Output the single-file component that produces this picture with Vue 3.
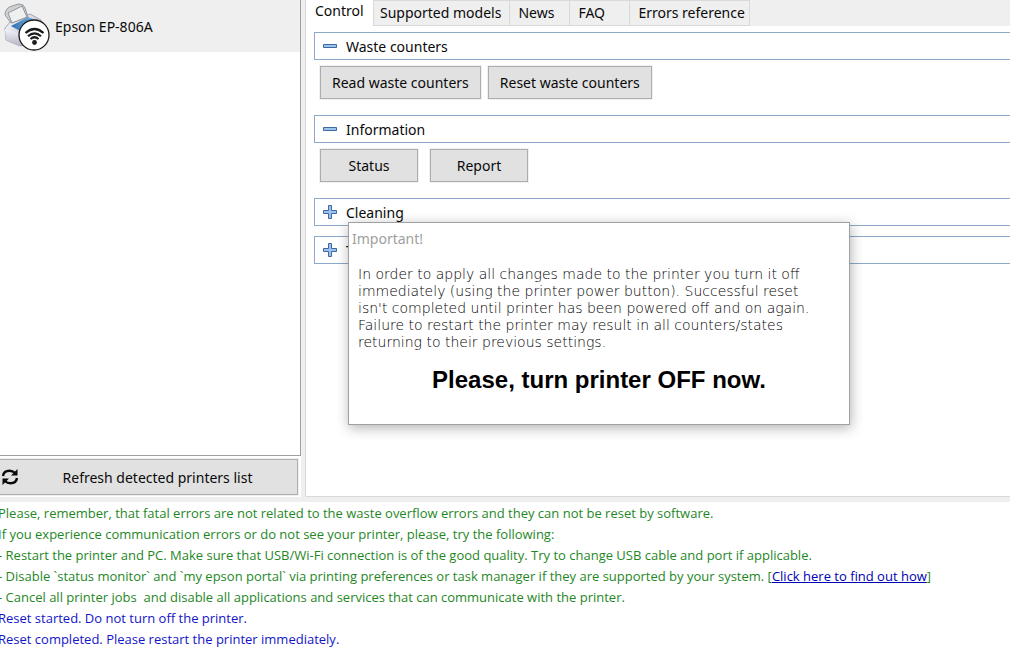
<template>
  <div class="app">
    <div class="workspace">
      <aside class="sidebar">
        <ul class="printer-list">
          <li v-for="printer in printers" :key="printer" class="printer">
            <svg class="printer-icon" width="50" height="50" viewBox="0 0 50 50">
              <defs>
                <linearGradient id="body" x1="0" y1="0" x2="1" y2="1">
                  <stop offset="0" stop-color="#ffffff" />
                  <stop offset="1" stop-color="#a9a9be" />
                </linearGradient>
                <linearGradient id="side" x1="0" y1="0" x2="0" y2="1">
                  <stop offset="0" stop-color="#f4f4fa" />
                  <stop offset="1" stop-color="#b4b4c6" />
                </linearGradient>
                <linearGradient id="tray" x1="0" y1="0" x2="1" y2="0">
                  <stop offset="0" stop-color="#2f6fb0" />
                  <stop offset="1" stop-color="#7db6e8" />
                </linearGradient>
              </defs>
              <path d="M5 27 L12 19 L30 13 L41 19 L42 38 L20 45 L6 39 Z" fill="url(#body)" stroke="#a4a4b4" />
              <path d="M5 28 L19 32 L20 45 L6 39 Z" fill="url(#side)" />
              <path d="M11 25 L28 16 L36 19 L20 30 Z" fill="url(#tray)" />
              <path d="M5 14 Q5 7 12 5 L19 3 Q24 3 25 7 L28 16 L11 22 Z" fill="#cfd2d5" stroke="#94989c" />
              <path d="M8 12 L22 5 L27 16 L12 22 Z" fill="#eef1f0" stroke="#8f9498" />
              <circle cx="34" cy="34" r="15" fill="#fff" stroke="#1a1a1a" stroke-width="1.3" />
              <g fill="none" stroke="#1a1a1a" stroke-width="2.2">
                <path d="M25.5 32 Q34.5 24 43.5 32" />
                <path d="M28 35.3 Q34.5 29.5 41 35.3" />
                <path d="M30.5 38 Q34.5 34.5 38.5 38" />
              </g>
              <circle cx="34.5" cy="41.5" r="2.4" fill="#1a1a1a" />
            </svg>
            <span>{{ printer }}</span>
          </li>
        </ul>
        <div class="sidebar-footer">
          <button class="btn refresh-btn">
            <svg width="18" height="18" viewBox="0 0 18 18">
              <g fill="none" stroke="#0a0a0a" stroke-width="2.4">
                <path d="M2 8 C2.5 4.5 5 2.8 8.5 2.8 C11 2.8 12.6 3.6 14 5" />
                <path d="M16 10 C15.5 13.5 13 15.2 9.5 15.2 C7 15.2 5.4 14.4 4 13" />
              </g>
              <path d="M16.5 1 V7.5 H10 Z M1.5 17 V10.5 H8 Z" fill="#0a0a0a" />
            </svg>
            <span>Refresh detected printers list</span>
          </button>
        </div>
      </aside>

      <main class="panel">
        <nav class="tabs">
          <button
            v-for="tab in tabs"
            :key="tab"
            class="tab"
            :class="{ active: tab === activeTab }"
            @click="activeTab = tab"
          >{{ tab }}</button>
        </nav>

        <div class="groups">
          <section v-for="group in groups" :key="group.title" class="group">
            <button class="group-header" @click="group.open = !group.open">
              <svg width="16" height="16" viewBox="0 0 16 16">
                <path v-if="group.open" d="M1.5 6.5 H14.5 V9.5 H1.5 Z" fill="#9cc2ee" stroke="#3d68a0" />
                <path
                  v-else
                  d="M6.5 1.5 H9.5 V6.5 H14.5 V9.5 H9.5 V14.5 H6.5 V9.5 H1.5 V6.5 H6.5 Z"
                  fill="#9cc2ee"
                  stroke="#3d68a0"
                />
              </svg>
              <span>{{ group.title }}</span>
            </button>
            <div v-if="group.open" class="group-body" :class="{ spaced: group.spaced }">
              <button v-for="action in group.actions" :key="action" class="btn">{{ action }}</button>
            </div>
          </section>
        </div>
      </main>
    </div>

    <div class="log">
      <p v-for="line in hints" :key="line">{{ line }}</p>
      <p>
        - Disable `status monitor` and `my epson portal` via printing preferences or task manager if they are supported by your system. [<a href="#">Click here to find out how</a>]
      </p>
      <p class="keep">{{ cancelHint }}</p>
      <p v-for="line in messages" :key="line" class="message">{{ line }}</p>
    </div>

    <div class="dialog" role="dialog" aria-labelledby="dialog-title">
      <div id="dialog-title" class="dialog-title">Important!</div>
      <p class="dialog-text">
        In order to apply all changes made to the printer you turn it off<br />
        immediately (using the printer power button). Successful reset<br />
        isn't completed until printer has been powered off and on again.<br />
        Failure to restart the printer may result in all counters/states<br />
        returning to their previous settings.
      </p>
      <strong class="dialog-action">Please, turn printer OFF now.</strong>
    </div>
  </div>
</template>

<script setup>
import { ref } from 'vue'

const printers = ['Epson EP-806A']

const tabs = ['Control', 'Supported models', 'News', 'FAQ', 'Errors reference']
const activeTab = ref('Control')

const groups = ref([
  { title: 'Waste counters', open: true, actions: ['Read waste counters', 'Reset waste counters'] },
  { title: 'Information', open: true, spaced: true, actions: ['Status', 'Report'] },
  { title: 'Cleaning', open: false, actions: [] },
  { title: 'Tools', open: false, actions: [] }
])

const hints = [
  'Please, remember, that fatal errors are not related to the waste overflow errors and they can not be reset by software.',
  'If you experience communication errors or do not see your printer, please, try the following:',
  '- Restart the printer and PC. Make sure that USB/Wi-Fi connection is of the good quality. Try to change USB cable and port if applicable.'
]

const cancelHint = '- Cancel all printer jobs  and disable all applications and services that can communicate with the printer.'

const messages = [
  'Reset started. Do not turn off the printer.',
  'Reset completed. Please restart the printer immediately.'
]
</script>

<style>
body {
  margin: 0;
  background: #fff;
  overflow: hidden;
}
</style>

<style scoped>
.app {
  position: relative;
  min-height: 100vh;
  background: #fff;
  color: #0a0a0a;
  font-family: "Noto Sans", "Open Sans", sans-serif;
  font-size: 14px;
  line-height: 20px;
}

button {
  font: inherit;
  color: inherit;
}

.workspace {
  display: flex;
  height: 502px;
  box-sizing: border-box;
  padding-bottom: 5px;
  background: #efefef;
}

/* Printer list */
.sidebar {
  display: flex;
  flex-direction: column;
  flex: 0 0 301px;
  background: #fff;
}

.printer-list {
  flex: 1;
  margin: 0;
  padding: 0;
  list-style: none;
  border: solid #a0a0a0;
  border-width: 0 1px 1px 0;
}

.printer {
  display: flex;
  align-items: center;
  gap: 5px;
  height: 52px;
  background: #efefef;
}

.printer span {
  padding-top: 2px;
}

.sidebar-footer {
  padding: 3px 3px 2px 0;
}

.btn {
  height: 33px;
  padding: 0 11px;
  background: #e1e1e1;
  border: 1px solid #adadad;
  box-shadow: 0 0 0 1px #f0f0f0;
}

.refresh-btn {
  display: flex;
  align-items: center;
  width: 100%;
  height: 36px;
  padding: 0 1px;
  border-left: 0;
}

.refresh-btn span {
  flex: 1;
  padding-top: 2px;
}

/* Tabs */
.panel {
  flex: 1;
  min-width: 0;
  margin-left: 4px;
  background: #fff;
  border: solid #d9d9d9;
  border-width: 0 0 1px 1px;
}

.tabs {
  display: flex;
  height: 26px;
  background: linear-gradient(#efefef, #efefef) no-repeat 67px 0;
}

.tab {
  padding: 0 8px 0 6px;
  background: #efefef;
  border: solid #d9d9d9;
  border-width: 1px 1px 1px 0;
  text-align: left;
  white-space: nowrap;
}

.tab:nth-child(n + 3):nth-child(-n + 4) {
  min-width: 60px;
  padding-left: 8px;
}

.tab:last-child {
  padding: 0 4px 0 8px;
}

.tab.active {
  width: 68px;
  padding: 0 0 4px 9px;
  background: #fff;
  border-top: 0;
  border-bottom: 0;
}

/* Collapsible groups */
.groups {
  padding: 6px 0 0 8px;
}

.group {
  margin-bottom: 10px;
}

.group-header {
  display: flex;
  align-items: center;
  gap: 8px;
  width: 100%;
  height: 28px;
  padding: 0 7px;
  background: #fff;
  border: 1px solid #8ca9c8;
  border-right: 0;
  text-align: left;
}

.group-header span {
  padding-top: 2px;
}

.group-body {
  display: flex;
  gap: 7px;
  padding: 6px;
}

.group-body.spaced {
  gap: 12px;
}

.spaced .btn {
  min-width: 98px;
}

/* Log */
.log {
  margin-left: -2px;
  padding-top: 1px;
  color: #1f871f;
  font-family: "Open Sans", sans-serif;
  font-size: 13px;
  line-height: 21px;
  white-space: nowrap;
}

.log p {
  margin: 0;
}

.log .keep {
  white-space: pre;
}

.log .message {
  color: #1414c8;
}

.log a {
  color: #0000b4;
}

/* Dialog */
.dialog {
  position: absolute;
  top: 222px;
  left: 348px;
  width: 502px;
  height: 203px;
  box-sizing: border-box;
  background: #fff;
  border: 1px solid #a0a0a0;
  box-shadow: 1px 3px 12px rgba(0, 0, 0, 0.3);
}

.dialog-title {
  padding: 6px 3px 0;
  color: #a0a0a0;
}

.dialog-text {
  margin: 17px 9px 0;
  color: #000;
  font-family: "DejaVu Sans", sans-serif;
  font-size: 14px;
  font-weight: 200;
  line-height: 17px;
  white-space: nowrap;
}

.dialog-action {
  display: block;
  margin-top: 15px;
  color: #000;
  font-family: "Liberation Sans", sans-serif;
  font-size: 24px;
  line-height: 28px;
  text-align: center;
}
</style>
